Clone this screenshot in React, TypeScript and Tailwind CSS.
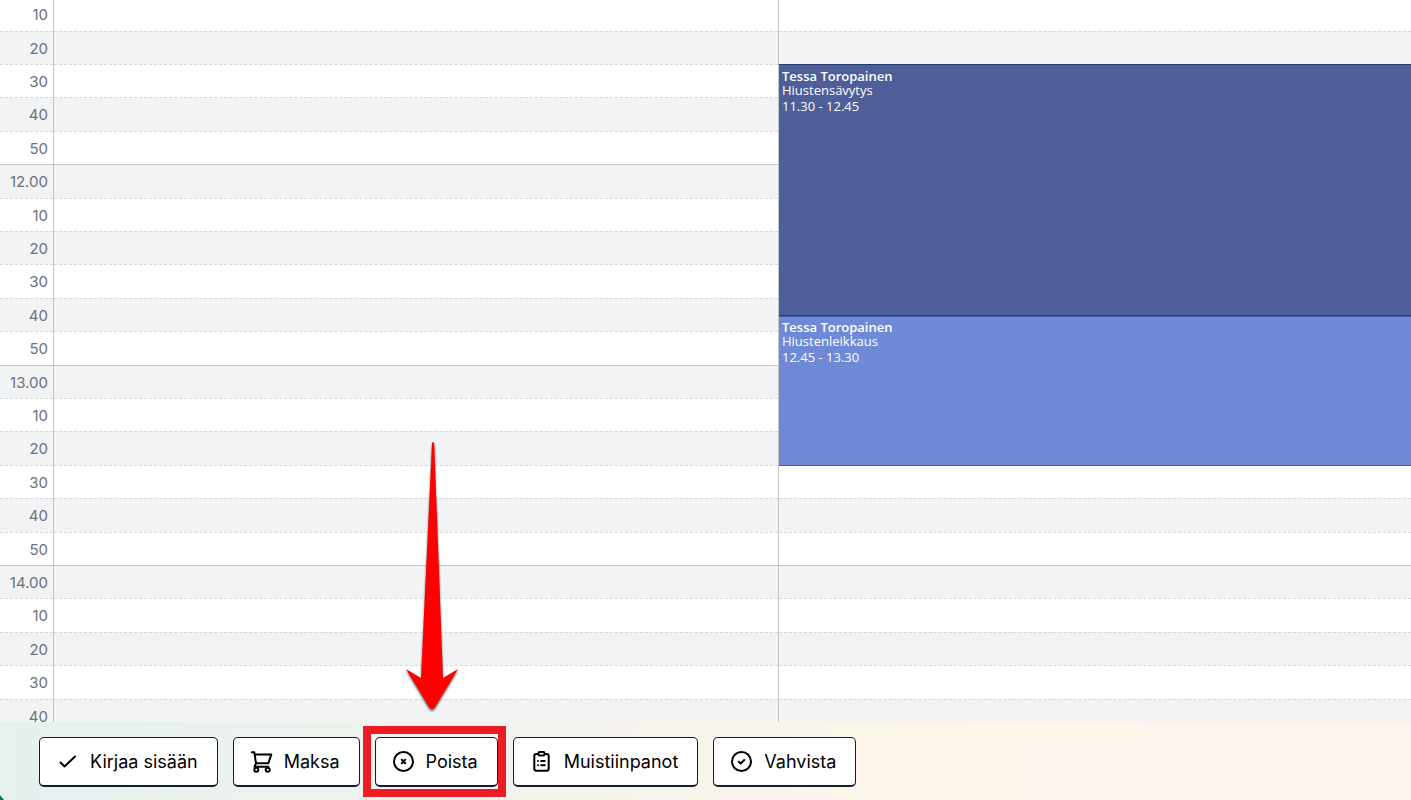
import type { ReactNode } from 'react'
import clsx from 'clsx'

type Slot = {
  label: string
  height: string
}

type Booking = {
  customer: string
  service: string
  time: string
  className: string
}

const slots: Slot[] = [
  { label: '10', height: 'h-[31px]' },
  { label: '20', height: 'h-[33px]' },
  { label: '30', height: 'h-[33px]' },
  { label: '40', height: 'h-[34px]' },
  { label: '50', height: 'h-[33px]' },
  { label: '12.00', height: 'h-[34px]' },
  { label: '10', height: 'h-[33px]' },
  { label: '20', height: 'h-[33px]' },
  { label: '30', height: 'h-[34px]' },
  { label: '40', height: 'h-[33px]' },
  { label: '50', height: 'h-[34px]' },
  { label: '13.00', height: 'h-[33px]' },
  { label: '10', height: 'h-[33px]' },
  { label: '20', height: 'h-[34px]' },
  { label: '30', height: 'h-[33px]' },
  { label: '40', height: 'h-[34px]' },
  { label: '50', height: 'h-[33px]' },
  { label: '14.00', height: 'h-[33px]' },
  { label: '10', height: 'h-[34px]' },
  { label: '20', height: 'h-[33px]' },
  { label: '30', height: 'h-[34px]' },
  { label: '40', height: 'h-[33px]' }
]

const bookings: Booking[] = [
  {
    customer: 'Tessa Toropainen',
    service: 'Hiustensävytys',
    time: '11.30 - 12.45',
    className: 'top-[64px] h-[252px] border-[#26376f] bg-[#4d5e98] pt-1'
  },
  {
    customer: 'Tessa Toropainen',
    service: 'Hiustenleikkaus',
    time: '12.45 - 13.30',
    className: 'top-[316px] h-[150px] border-[#4761ae] bg-[#6e8ad6] pt-[3px]'
  }
]

const SlotColumn = ({ showLabels = false }: { showLabels?: boolean }) => (
  <div>
    {slots.map((slot, index) => (
      <div
        key={index}
        className={clsx(
          'flex items-center justify-end pr-[5px] text-[15px] leading-5 text-[#68717d]',
          slot.height,
          index % 2 === 1 && 'bg-[#f2f3f5]',
          index > 0 ? 'border-t pt-px' : 'pb-px',
          slot.label.endsWith('.00')
            ? 'border-solid border-[#c3c5c8]'
            : 'border-dashed border-[#d6d7d9]'
        )}>
        {showLabels && slot.label}
      </div>
    ))}
  </div>
)

const BookingCard = ({ booking }: { booking: Booking }) => (
  <article
    className={clsx(
      "absolute inset-x-0 border-y px-[3px] font-['Open_Sans','Noto_Sans',sans-serif] text-[13px] text-white",
      booking.className
    )}>
    <h3 className="leading-[14px] font-semibold">{booking.customer}</h3>
    <p className="leading-[15px]">{booking.service}</p>
    <p className="leading-4">{booking.time}</p>
  </article>
)

const Icon = ({ children }: { children: ReactNode }) => (
  <svg
    viewBox="0 0 24 24"
    className="size-6"
    fill="none"
    stroke="currentColor"
    strokeWidth="2"
    strokeLinecap="round"
    strokeLinejoin="round"
    aria-hidden="true">
    {children}
  </svg>
)

const ActionButton = ({
  label,
  children
}: {
  label: string
  children: ReactNode
}) => (
  <button
    type="button"
    className="flex h-[50px] items-center gap-[10px] rounded-[5px] border border-b-2 border-[#151c2c] bg-white pr-[19px] pl-4 text-lg text-black">
    <Icon>{children}</Icon>
    {label}
  </button>
)

// red frame and arrow around the button being explained
const Highlight = ({ children }: { children: ReactNode }) => (
  <div className="relative">
    {children}
    <div className="pointer-events-none absolute -top-[11px] -right-2 -bottom-[10px] -left-3 border-8 border-[#ed1c24]" />
    <svg
      viewBox="0 0 60 280"
      className="pointer-events-none absolute bottom-[69px] left-[27px] h-[280px] w-[60px] drop-shadow-[0_2px_1px_rgba(0,0,0,0.6)]"
      aria-hidden="true">
      <path
        d="M31 4q1 0 1.2 2L41 240l15-9-23 38q-3 4-6 0L4 231l15 9L30 6q0-2 1-2Z"
        fill="#fe0000"
      />
    </svg>
  </div>
)

const App = () => {
  return (
    <div className="flex h-screen flex-col overflow-hidden bg-white font-['Inter',sans-serif]">
      <main className="min-h-0 flex-1 overflow-hidden">
        <div className="grid grid-cols-[54px_725fr_632fr]">
          <div className="border-r border-[#c3c5c8]">
            <SlotColumn showLabels />
          </div>
          <div className="border-r border-[#c3c5c8]">
            <SlotColumn />
          </div>
          <div className="relative">
            <SlotColumn />
            {bookings.map(booking => (
              <BookingCard key={booking.time} booking={booking} />
            ))}
          </div>
        </div>
      </main>

      <footer className="relative flex h-[78px] shrink-0 items-start gap-[15px] bg-linear-to-r from-[#e5f0ef] via-[#fff6ea] via-70% to-[#fff3ef] pt-[15px] pl-[39px]">
        <ActionButton label="Kirjaa sisään">
          <path d="m4.5 12.5 4 4L19 6.5" />
        </ActionButton>
        <ActionButton label="Maksa">
          <path d="M1.8 2.3h2.5L6 13.3l-1.5 3.4h13.8M5 4.6h16.3l-3 8.7H6" />
          <circle cx="6.3" cy="19.7" r="2" />
          <circle cx="17.7" cy="19.7" r="2" />
        </ActionButton>
        <Highlight>
          <ActionButton label="Poista">
            <circle cx="11.5" cy="11.5" r="9.5" />
            <path d="m9.8 9.8 3.4 3.4m0-3.4-3.4 3.4" />
          </ActionButton>
        </Highlight>
        <ActionButton label="Muistiinpanot">
          <rect x="4.3" y="3.9" width="14.4" height="16.8" rx="2" />
          <rect x="8.5" y="2" width="6" height="3.6" rx="1" fill="white" />
          <path d="M8 11h.01M11.2 11h3.5M8 15.3h.01M11.2 15.3h3.5" />
        </ActionButton>
        <ActionButton label="Vahvista">
          <circle cx="11.5" cy="11.5" r="9.5" />
          <path d="m8.8 11.7 1.9 1.8 3.5-3.5" />
        </ActionButton>
        <svg
          viewBox="0 0 4 5"
          className="absolute bottom-0 left-0 h-[5px] w-1"
          aria-hidden="true">
          <path d="M0 0 4 5H0Z" fill="#077c5b" />
        </svg>
      </footer>
    </div>
  )
}

export default App
